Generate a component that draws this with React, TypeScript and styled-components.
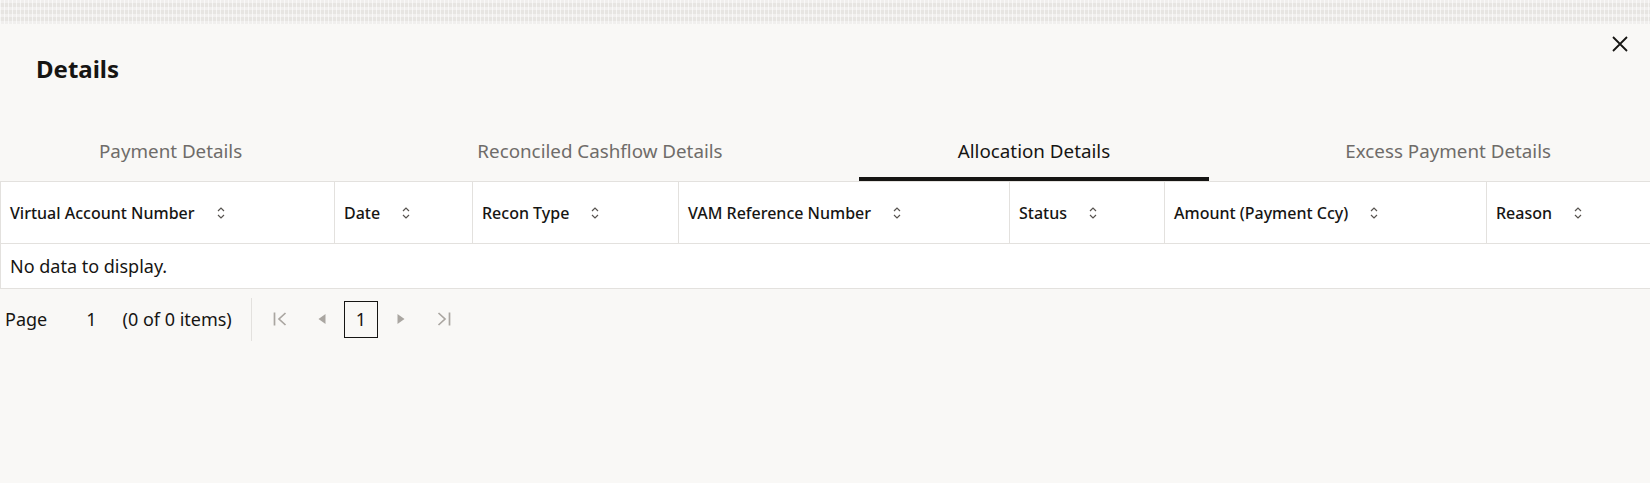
import React from "react";
import styled, { createGlobalStyle } from "styled-components";

const GlobalStyle = createGlobalStyle`
  html, body { margin: 0; padding: 0; }
  body {
    background: #f9f8f6;
    font-family: "Noto Sans", "Open Sans", sans-serif;
    color: #161513;
  }
  * { box-sizing: border-box; }
`;

const Screen = styled.div`
  width: 1650px;
  height: 483px;
  display: flex;
  flex-direction: column;
  overflow: hidden;
`;

const Backdrop = styled.div`
  flex: none;
  height: 24px;
  background-color: #e7e5e2;
  background-image:
    repeating-linear-gradient(90deg, rgba(255,255,255,0.6) 0 1px, transparent 1px 4px),
    repeating-linear-gradient(0deg, rgba(255,255,255,0.4) 0 3px, transparent 3px 7px);
`;

const Dialog = styled.section`
  flex: 1;
  background: #f9f8f6;
  display: flex;
  flex-direction: column;
`;

const DialogHeader = styled.header`
  display: flex;
  justify-content: space-between;
  align-items: flex-start;
  height: 97px;
  padding-left: 36px;
`;

const Title = styled.h1`
  margin: 29px 0 0;
  font-size: 24px;
  line-height: 32px;
  font-weight: 700;
  color: #161513;
`;

const CloseButton = styled.button`
  width: 32px;
  height: 32px;
  margin: 4px 14px 0 0;
  border: none;
  background: transparent;
  padding: 0;
  display: flex;
  align-items: center;
  justify-content: center;
  color: #161513;
  cursor: pointer;
`;

const TabBar = styled.nav`
  display: flex;
  justify-content: space-between;
  height: 60px;
`;

const Tab = styled.div<{ $active?: boolean }>`
  display: flex;
  align-items: center;
  justify-content: center;
  padding: 0 99px;
  font-size: 18.8px;
  color: ${(p) => (p.$active ? "#161513" : "#6f6c69")};
  box-shadow: ${(p) => (p.$active ? "inset 0 -4px 0 #161513" : "none")};
  white-space: nowrap;
`;

const Table = styled.div`
  display: grid;
  grid-template-columns: 334px 138px 206px 331px 155px 322px 1fr;
  border-top: 1px solid #e3e1de;
  border-left: 1px solid #e3e1de;
  border-bottom: 1px solid #e3e1de;
  background: #ffffff;
`;

const HeadCell = styled.div<{ $last?: boolean }>`
  height: 62px;
  display: flex;
  align-items: center;
  padding-left: 9px;
  font-size: 16px;
  font-weight: 500;
  color: #161513;
  border-right: ${(p) => (p.$last ? "none" : "1px solid #e3e1de")};
  border-bottom: 1px solid #e3e1de;
  white-space: nowrap;
`;

const SortIcon = styled.svg`
  margin-left: 22px;
  flex: none;
`;

const EmptyRow = styled.div`
  grid-column: 1 / -1;
  height: 44px;
  display: flex;
  align-items: center;
  padding-left: 9px;
  font-size: 18px;
  color: #161513;
`;

const Pager = styled.div`
  display: flex;
  align-items: center;
  height: 60px;
  padding-left: 5px;
  font-size: 18px;
  color: #161513;
`;

const PagerLabel = styled.span`
  margin-right: 39px;
`;

const PagerValue = styled.span`
  margin-right: 26px;
`;

const PagerSep = styled.div`
  width: 1px;
  height: 43px;
  background: #e3e1de;
  margin: 0 8px 0 19px;
`;

const NavIcon = styled.svg`
  flex: none;
  color: #aaa6a1;
`;

const NavSlot = styled.div<{ $w: number }>`
  width: ${(p) => p.$w}px;
  height: 37px;
  display: flex;
  align-items: center;
  justify-content: center;
`;

const PageBox = styled.div`
  width: 34px;
  height: 37px;
  border: 1px solid #161513;
  display: flex;
  align-items: center;
  justify-content: center;
  font-size: 18px;
`;

const Sort = () => (
  <SortIcon width="8" height="14" viewBox="0 0 8 14" fill="none" stroke="#57534f" strokeWidth="1.2">
    <path d="M1 5 L4 2 L7 5" />
    <path d="M1 9 L4 12 L7 9" />
  </SortIcon>
);

const columns = [
  "Virtual Account Number",
  "Date",
  "Recon Type",
  "VAM Reference Number",
  "Status",
  "Amount (Payment Ccy)",
  "Reason",
];

const tabs = [
  "Payment Details",
  "Reconciled Cashflow Details",
  "Allocation Details",
  "Excess Payment Details",
];

export default function App() {
  return (
    <>
      <GlobalStyle />
      <Screen>
        <Backdrop />
        <Dialog>
          <DialogHeader>
            <Title>Details</Title>
            <CloseButton aria-label="Close">
              <svg width="16" height="16" viewBox="0 0 16 16" fill="none" stroke="#161513" strokeWidth="1.8">
                <path d="M1 1 L15 15 M15 1 L1 15" />
              </svg>
            </CloseButton>
          </DialogHeader>
          <TabBar>
            {tabs.map((t) => (
              <Tab key={t} $active={t === "Allocation Details"}>
                {t}
              </Tab>
            ))}
          </TabBar>
          <Table>
            {columns.map((c, i) => (
              <HeadCell key={c} $last={i === columns.length - 1}>
                {c}
                <Sort />
              </HeadCell>
            ))}
            <EmptyRow>No data to display.</EmptyRow>
          </Table>
          <Pager>
            <PagerLabel>Page</PagerLabel>
            <PagerValue>1</PagerValue>
            <span>(0 of 0 items)</span>
            <PagerSep />
            <NavSlot $w={40}>
              <NavIcon width="14" height="16" viewBox="0 0 14 16" fill="none" stroke="currentColor" strokeWidth="1.7">
                <path d="M1.5 1.5 V14.5" />
                <path d="M12.5 2 L6 8 L12.5 14" />
              </NavIcon>
            </NavSlot>
            <NavSlot $w={44}>
              <NavIcon width="8" height="12" viewBox="0 0 8 12" fill="currentColor">
                <path d="M7.5 1 L0.5 6 L7.5 11 Z" />
              </NavIcon>
            </NavSlot>
            <PageBox>1</PageBox>
            <NavSlot $w={46}>
              <NavIcon width="8" height="12" viewBox="0 0 8 12" fill="currentColor">
                <path d="M0.5 1 L7.5 6 L0.5 11 Z" />
              </NavIcon>
            </NavSlot>
            <NavSlot $w={40}>
              <NavIcon width="14" height="16" viewBox="0 0 14 16" fill="none" stroke="currentColor" strokeWidth="1.7">
                <path d="M12.5 1.5 V14.5" />
                <path d="M1.5 2 L8 8 L1.5 14" />
              </NavIcon>
            </NavSlot>
          </Pager>
        </Dialog>
      </Screen>
    </>
  );
}
